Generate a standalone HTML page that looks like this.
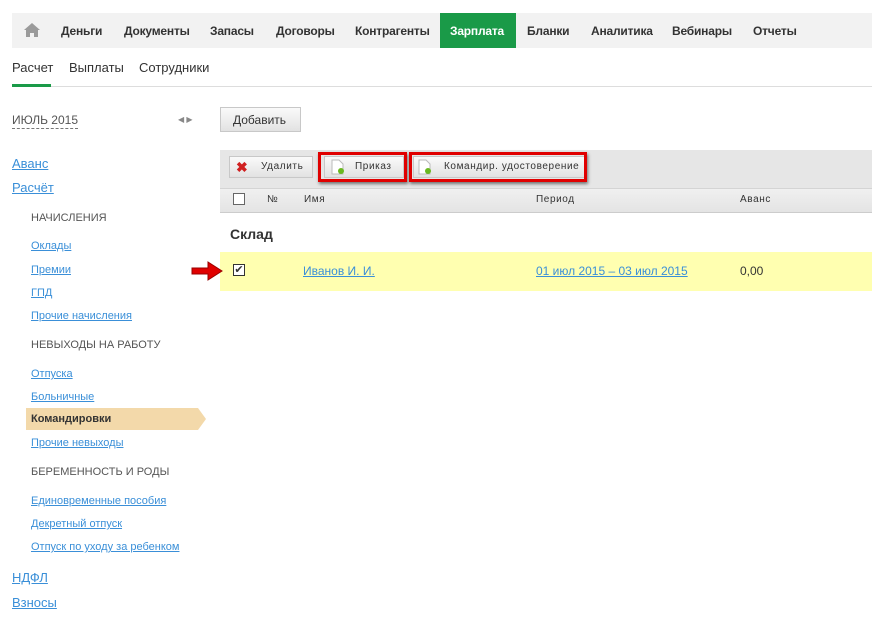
<!DOCTYPE html><html><head><meta charset="utf-8"><style>
*{margin:0;padding:0;box-sizing:border-box}
body{width:878px;height:620px;background:#fff;font-family:"Liberation Sans",sans-serif;position:relative;overflow:hidden;color:#333}
.a{position:absolute;white-space:nowrap}
a,.l{color:#3a8fd8;text-decoration:underline}
.nav{left:12px;top:13px;width:860px;height:35px;background:#f2f2f2}
.nav span{position:absolute;top:11px;font-size:12px;font-weight:bold;color:#333;letter-spacing:-0.2px}
.btn{position:absolute;height:22px;background:linear-gradient(#fafafa,#e2e2e2);border:1px solid #c8c8c8;font-size:10px;letter-spacing:.6px;color:#333}
.red{position:absolute;border:3px solid #e00000;box-shadow:1px 2px 3px rgba(0,0,0,.5)}
.s{font-size:11px}
</style></head><body>
<div class="a nav">
<svg style="position:absolute;left:11px;top:9px" width="18" height="16" viewBox="0 0 18 16"><path d="M9 1L1 8h2v7h4v-4h4v4h4V8h2z" fill="#9a9a9a"/></svg>
<span style="left:49px">Деньги</span><span style="left:112px">Документы</span><span style="left:198px">Запасы</span><span style="left:264px">Договоры</span><span style="left:343px">Контрагенты</span>
<div style="position:absolute;left:428px;top:0;width:76px;height:35px;background:#1a9a48"></div><span style="left:438px;color:#fff">Зарплата</span>
<span style="left:515px">Бланки</span><span style="left:579px">Аналитика</span><span style="left:660px">Вебинары</span><span style="left:741px">Отчеты</span>
</div>
<div class="a" style="left:12px;top:60px;font-size:13px">Расчет</div>
<div class="a" style="left:69px;top:60px;font-size:13px">Выплаты</div>
<div class="a" style="left:139px;top:60px;font-size:13px">Сотрудники</div>
<div class="a" style="left:12px;top:86px;width:860px;height:1px;background:#ddd"></div>
<div class="a" style="left:12px;top:84px;width:39px;height:3px;background:#1a9a48"></div>
<div class="a" style="left:12px;top:113px;font-size:12px;color:#555;border-bottom:1px dashed #777;line-height:15px">ИЮЛЬ 2015</div>
<div class="a" style="left:178px;top:115px;font-size:8px;color:#888">◀ ▶</div>
<div class="btn" style="left:220px;top:107px;width:81px;height:25px;font-size:12px;letter-spacing:0;padding:5px 0 0 12px">Добавить</div>
<div class="a l" style="left:12px;top:156px;font-size:13px">Аванс</div>
<div class="a l" style="left:12px;top:180px;font-size:13px">Расчёт</div>
<div class="a s" style="left:31px;top:212px;color:#555">НАЧИСЛЕНИЯ</div>
<div class="a l s" style="left:31px;top:240px">Оклады</div>
<div class="a l s" style="left:31px;top:264px">Премии</div>
<div class="a l s" style="left:31px;top:287px">ГПД</div>
<div class="a l s" style="left:31px;top:310px">Прочие начисления</div>
<div class="a s" style="left:31px;top:339px;color:#555">НЕВЫХОДЫ НА РАБОТУ</div>
<div class="a l s" style="left:31px;top:368px">Отпуска</div>
<div class="a l s" style="left:31px;top:391px">Больничные</div>
<svg class="a" style="left:26px;top:408px" width="180" height="22"><path d="M0 0H172l8 11-8 11H0z" fill="#f3d9aa"/></svg>
<div class="a s" style="left:31px;top:413px;font-weight:bold">Командировки</div>
<div class="a l s" style="left:31px;top:437px">Прочие невыходы</div>
<div class="a s" style="left:31px;top:466px;color:#555">БЕРЕМЕННОСТЬ И РОДЫ</div>
<div class="a l s" style="left:31px;top:495px">Единовременные пособия</div>
<div class="a l s" style="left:31px;top:518px">Декретный отпуск</div>
<div class="a l s" style="left:31px;top:541px">Отпуск по уходу за ребенком</div>
<div class="a l" style="left:12px;top:570px;font-size:13px">НДФЛ</div>
<div class="a l" style="left:12px;top:595px;font-size:13px">Взносы</div>

<div class="a" style="left:220px;top:150px;width:652px;height:63px;background:#e6e6e6"></div>
<div class="a" style="left:220px;top:188px;width:652px;height:25px;background:linear-gradient(#f0f0f0,#e4e4e4);border-top:1px solid #d4d4d4;border-bottom:1px solid #ccc"></div>
<div class="btn" style="left:229px;top:156px;width:84px;padding:4px 0 0 31px">Удалить</div>
<div class="a" style="left:236px;top:159px;color:#d02020;font-weight:bold;font-size:14px">✖</div>
<div class="btn" style="left:324px;top:156px;width:80px;padding:4px 0 0 30px">Приказ</div>
<div class="btn" style="left:413px;top:156px;width:172px;padding:4px 0 0 30px">Командир. удостоверение</div>
<svg class="a" style="left:331px;top:159px" width="14" height="16"><path d="M1 1h7l4 4v10H1z" fill="#fff" stroke="#bbb"/><circle cx="10" cy="12" r="3" fill="#6ab820"/></svg>
<svg class="a" style="left:418px;top:159px" width="14" height="16"><path d="M1 1h7l4 4v10H1z" fill="#fff" stroke="#bbb"/><circle cx="10" cy="12" r="3" fill="#6ab820"/></svg>
<div class="red" style="left:318px;top:152px;width:89px;height:30px"></div>
<div class="red" style="left:409px;top:152px;width:178px;height:30px"></div>
<div class="a" style="left:233px;top:193px;width:12px;height:12px;border:1px solid #666;background:#fff"></div>
<div class="a" style="left:267px;top:194px;font-size:10px;letter-spacing:.6px">№</div>
<div class="a" style="left:304px;top:194px;font-size:10px;letter-spacing:.6px">Имя</div>
<div class="a" style="left:536px;top:194px;font-size:10px;letter-spacing:.6px">Период</div>
<div class="a" style="left:740px;top:194px;font-size:10px;letter-spacing:.6px">Аванс</div>
<div class="a" style="left:230px;top:226px;font-size:14px;font-weight:bold">Склад</div>
<div class="a" style="left:220px;top:252px;width:652px;height:39px;background:#ffffb0"></div>
<div class="a" style="left:233px;top:264px;width:12px;height:12px;border:1px solid #333;background:#fff;font-size:11px;line-height:10px;text-align:center">✔</div>
<div class="a l" style="left:303px;top:264px;font-size:12px">Иванов И. И.</div>
<div class="a l" style="left:536px;top:264px;font-size:12px">01 июл 2015 – 03 июл 2015</div>
<div class="a" style="left:740px;top:264px;font-size:12px">0,00</div>
<svg class="a" style="left:190px;top:260px" width="36" height="22"><path d="M2 8h16V2l14 9-14 9v-6H2z" fill="#e00000" stroke="#900" stroke-width="1"/></svg>
</body></html>
